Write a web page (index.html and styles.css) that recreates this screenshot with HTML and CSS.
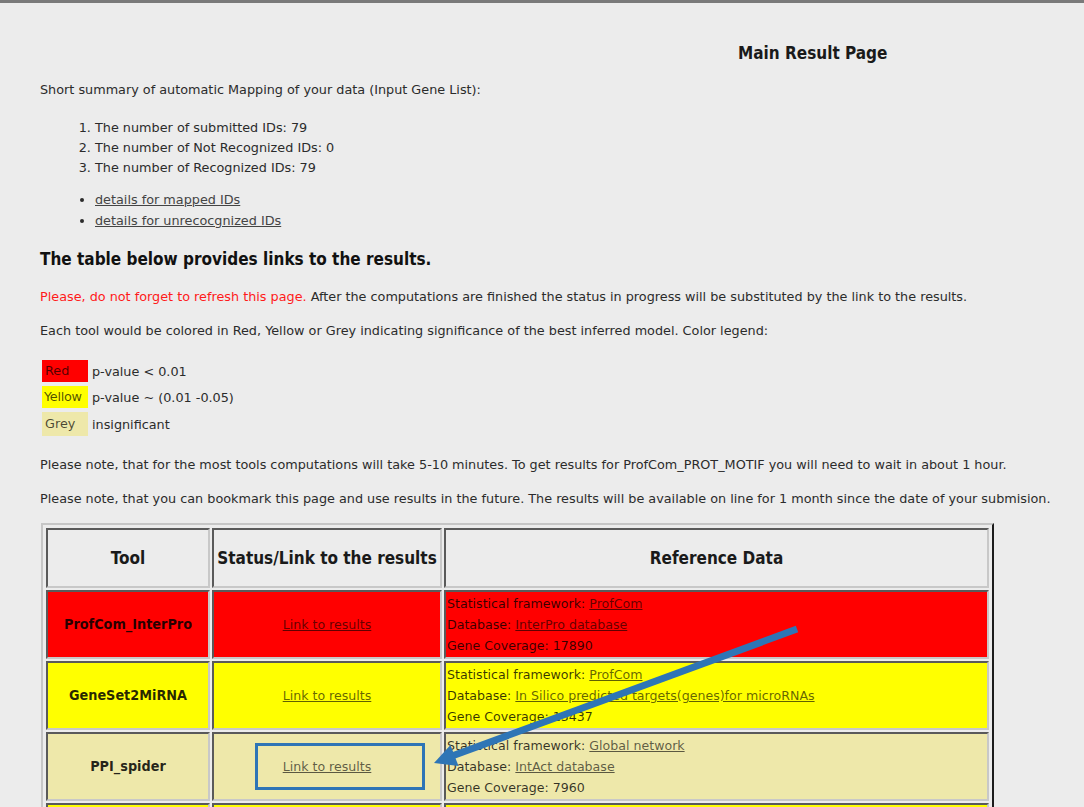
FILE: index.html
```html
<!DOCTYPE html>
<html>
<head>
<meta charset="utf-8">
<title>Main Result Page</title>
<link rel="stylesheet" href="styles.css">
</head>
<body>
<div class="page">
  <div class="title">Main Result Page</div>
  <p class="summary">Short summary of automatic Mapping of your data (Input Gene List):</p>
  <ol class="counts">
    <li>The number of submitted IDs: 79</li>
    <li>The number of Not Recognized IDs: 0</li>
    <li>The number of Recognized IDs: 79</li>
  </ol>
  <ul class="details">
    <li><a href="#">details for mapped IDs</a></li>
    <li><a href="#">details for unrecocgnized IDs</a></li>
  </ul>
  <h2 class="heading">The table below provides links to the results.</h2>
  <p class="refresh"><span class="warn">Please, do not forget to refresh this page.</span> After the computations are finished the status in progress will be substituted by the link to the results.</p>
  <p class="para">Each tool would be colored in Red, Yellow or Grey indicating significance of the best inferred model. Color legend:</p>
  <div class="legend">
    <div class="swatch red">Red</div><div class="ltext">p-value &lt; 0.01</div>
    <div class="swatch yellow">Yellow</div><div class="ltext">p-value ~ (0.01 -0.05)</div>
    <div class="swatch grey">Grey</div><div class="ltext">insignificant</div>
  </div>
  <p class="note1">Please note, that for the most tools computations will take 5-10 minutes. To get results for ProfCom_PROT_MOTIF you will need to wait in about 1 hour.</p>
  <p class="note2">Please note, that you can bookmark this page and use results in the future. The results will be available on line for 1 month since the date of your submision.</p>
  <table class="results">
    <tr class="head">
      <th class="c1">Tool</th>
      <th class="c2">Status/Link to the results</th>
      <th class="c3">Reference Data</th>
    </tr>
    <tr class="red">
      <td class="tool">ProfCom_InterPro</td>
      <td class="status"><a href="#">Link to results</a></td>
      <td class="ref">Statistical framework: <a href="#">ProfCom</a><br>Database: <a href="#">InterPro database</a><br>Gene Coverage: 17890</td>
    </tr>
    <tr class="yellow">
      <td class="tool">GeneSet2MiRNA</td>
      <td class="status"><a href="#">Link to results</a></td>
      <td class="ref">Statistical framework: <a href="#">ProfCom</a><br>Database: <a href="#">In Silico predicted targets(genes)for microRNAs</a><br>Gene Coverage: 13437</td>
    </tr>
    <tr class="grey">
      <td class="tool">PPI_spider</td>
      <td class="status"><a href="#">Link to results</a></td>
      <td class="ref">Statistical framework: <a href="#">Global network</a><br>Database: <a href="#">IntAct database</a><br>Gene Coverage: 7960</td>
    </tr>
    <tr class="yellow next">
      <td class="tool"></td>
      <td class="status"></td>
      <td class="ref"></td>
    </tr>
  </table>
</div>
<svg class="annot" width="1084" height="807" viewBox="0 0 1084 807">
  <rect x="256.5" y="744.5" width="167" height="44" fill="none" stroke="#2e75b6" stroke-width="3"/>
  <line x1="797" y1="629" x2="452" y2="756" stroke="#2e75b6" stroke-width="7"/>
  <polygon points="434,763 458.5,766 450.5,745" fill="#2e75b6"/>
</svg>
</body>
</html>
```
FILE: styles.css
```css
html {
  overflow: hidden;
}
body {
  margin: 0;
  background: #ececec;
  font-family: "DejaVu Sans", sans-serif;
  font-size: 12.8px;
  color: #2b2b2b;
  position: relative;
}
a {
  color: #444;
  text-decoration: underline;
}
.page {
  border-top: 3px solid #7a7a7a;
  padding-left: 40px;
}
.title {
  margin-top: 40px;
  padding-left: 698px;
  font-family: "DejaVu Sans Condensed", "DejaVu Sans", sans-serif;
  font-stretch: condensed;
  font-size: 17px;
  font-weight: bold;
  line-height: 20px;
  color: #1a1a1a;
}
p {
  margin: 0;
  line-height: 20px;
}
.summary {
  margin-top: 17px;
}
.counts {
  margin: 18px 0 0;
  padding-left: 55px;
}
.counts li {
  line-height: 20px;
}
.details {
  margin: 11px 0 0;
  padding-left: 55px;
  list-style: disc;
}
.details li {
  line-height: 21px;
}
.heading {
  margin: 16px 0 0;
  font-family: "DejaVu Sans Condensed", "DejaVu Sans", sans-serif;
  font-stretch: condensed;
  font-size: 17px;
  line-height: 24px;
  color: #111;
}
.refresh {
  margin-top: 16px;
}
.warn {
  color: #ff1a1a;
}
.para {
  margin-top: 14px;
}
.legend {
  margin: 19px 0 0 2px;
  display: grid;
  grid-template-columns: 46px auto;
  grid-template-rows: 22px 22px 24px;
  row-gap: 4px;
  column-gap: 4px;
  align-items: center;
}
.swatch {
  height: 100%;
  line-height: 22px;
  padding-left: 3px;
  color: rgba(0,0,0,0.7);
  overflow: hidden;
  white-space: nowrap;
}
.swatch.red { background: #ff0000; }
.swatch.yellow { background: #ffff00; padding-left: 2px; letter-spacing: -0.3px; }
.swatch.grey { background: #eee8aa; line-height: 24px; }
.note1 {
  margin-top: 19px;
}
.note2 {
  margin-top: 14px;
}
.results {
  margin: 14px 0 0 1px;
  border-style: solid;
  border-width: 2px;
  border-color: #c6c6c6 #1c1c1c #1c1c1c #c6c6c6;
  border-spacing: 2px;
  padding: 1px;
  table-layout: fixed;
  width: 953px;
}
.results th,
.results td {
  border-style: solid;
  border-width: 2px;
  border-color: #5a5a5a #c8c8c8 #c8c8c8 #5a5a5a;
}
.results th {
  height: 56px;
  padding: 0;
  font-family: "DejaVu Sans Condensed", "DejaVu Sans", sans-serif;
  font-stretch: condensed;
  font-size: 17px;
  font-weight: bold;
  color: #1a1a1a;
  text-align: center;
}
.c1 { width: 160px; }
.c2 { width: 226px; }
.c3 { width: auto; }
.results td {
  padding: 1px 1px;
  line-height: 21px;
  font-size: 12.6px;
  color: rgba(0,0,0,0.78);
  vertical-align: middle;
}
.results td a {
  color: rgba(0,0,0,0.62);
}
.results .tool {
  text-align: center;
  font-family: "DejaVu Sans Condensed", "DejaVu Sans", sans-serif;
  font-stretch: condensed;
  font-weight: bold;
  font-size: 14.3px;
  color: rgba(0,0,0,0.85);
}
.results .status {
  text-align: center;
}
.results tr.next td {
  height: 63px;
}
tr.red td { background: #ff0000; }
tr.yellow td { background: #ffff00; }
tr.grey td { background: #eee8aa; }
.annot {
  position: absolute;
  left: 0;
  top: 0;
  pointer-events: none;
}
```
